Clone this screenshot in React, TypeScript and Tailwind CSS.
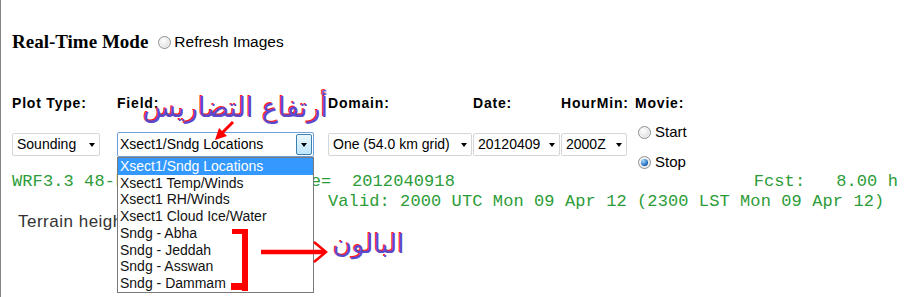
import type { ReactNode } from "react";

const line1 =
  "WRF3.3 48-km" + " ".repeat(9) + "Init Date=  2012040918" + " ".repeat(29) + "Fcst:   8.00 h";

const fieldOptions = [
  "Xsect1/Sndg Locations",
  "Xsect1 Temp/Winds",
  "Xsect1 RH/Winds",
  "Xsect1 Cloud Ice/Water",
  "Sndg - Abha",
  "Sndg - Jeddah",
  "Sndg - Asswan",
  "Sndg - Dammam",
];

function Radio({ checked = false }: { checked?: boolean }) {
  return (
    <span className="inline-flex h-[13px] w-[13px] shrink-0 items-center justify-center rounded-full border border-[#8e8f8f] bg-[radial-gradient(circle_at_40%_35%,#ffffff,#d4d4d4)] shadow-[inset_0_0_0_1px_#f2f2f2]">
      {checked && (
        <span className="h-[7px] w-[7px] rounded-full bg-[radial-gradient(circle_at_35%_30%,#a6dcff,#1760b4_70%)]" />
      )}
    </span>
  );
}

function Caret() {
  return <span className="h-0 w-0 border-x-[3.5px] border-t-[4px] border-x-transparent border-t-black" />;
}

function Select({ value, width }: { value: string; width: string }) {
  return (
    <div
      className={`flex h-[23px] items-center justify-between rounded-[2px] border border-[#d6d6d6] bg-white pl-[4px] pr-[4px] text-[14px] text-black ${width}`}
    >
      <span>{value}</span>
      <Caret />
    </div>
  );
}

function Col({ width, children }: { width: string; children: ReactNode }) {
  return <div className={`pt-[11px] ${width}`}>{children}</div>;
}

export default function App() {
  return (
    <div className="relative h-[297px] w-[922px] overflow-hidden border-l border-[#858585] bg-white font-['Liberation_Sans',Arial,sans-serif] text-black">
      <div className="pl-[11px] pt-[31px]">
        <div className="flex h-[22px] items-center">
          <span className="font-['Liberation_Serif','Times_New_Roman',serif] text-[19px] font-bold">Real-Time Mode</span>
          <span className="ml-[10px] flex">
            <Radio />
          </span>
          <span className="ml-[3px] text-[15.5px]">Refresh Images</span>
        </div>

        <div className="mt-[42px] flex h-[16px] items-center text-[14px] leading-[16px] font-bold tracking-[0.8px]">
          <span className="w-[105px]">Plot Type:</span>
          <span className="w-[211px]">Field:</span>
          <span className="w-[145px]">Domain:</span>
          <span className="w-[88px]">Date:</span>
          <span className="w-[74px]">HourMin:</span>
          <span>Movie:</span>
        </div>

        <div className="mt-[11px] flex items-start">
          <Col width="w-[105px]">
            <Select value="Sounding" width="w-[88px]" />
          </Col>

          <div className="relative z-10 w-[211px] pt-[10px]">
            <div className="flex h-[25px] w-[197px] items-stretch rounded-[2px] border border-[#6f9fd6] bg-white text-[14px]">
              <span className="flex flex-1 items-center pl-[2px]">Xsect1/Sndg Locations</span>
              <span className="m-[1px] flex w-[16px] items-center justify-center rounded-[2px] border border-[#3c7fb1] bg-[linear-gradient(#eaf6fd,#bde5fc)]">
                <Caret />
              </span>
            </div>
            <div className="absolute top-[35px] left-0 w-[197px] border border-[#7a7a7a] bg-white p-0 text-[14px] text-[#111]">
              {fieldOptions.map((opt, i) => (
                <div
                  key={opt}
                  className={`flex h-[16.75px] items-center pl-[2px] ${i === 0 ? "bg-[#3399ff] text-white" : ""}`}
                >
                  {opt}
                </div>
              ))}
            </div>
          </div>

          <Col width="w-[145px]">
            <Select value="One (54.0 km grid)" width="w-[144px]" />
          </Col>
          <Col width="w-[88px]">
            <Select value="20120409" width="w-[87px]" />
          </Col>
          <Col width="w-[74px]">
            <Select value="2000Z" width="w-[66px]" />
          </Col>

          <div className="flex flex-col gap-[10px] pl-[3px] text-[15px]">
            <div className="flex h-[20px] items-center gap-[4px]">
              <Radio />
              <span>Start</span>
            </div>
            <div className="flex h-[20px] items-center gap-[4px]">
              <Radio checked />
              <span>Stop</span>
            </div>
          </div>
        </div>

        <div className="font-['Liberation_Mono',monospace] text-[17px] leading-[20px] tracking-[0.1px] text-[#2c9c38]">
          <div className="whitespace-pre">{line1}</div>
          <div className="whitespace-pre pl-[316px]">Valid: 2000 UTC Mon 09 Apr 12 (2300 LST Mon 09 Apr 12)</div>
        </div>
        <div className="pl-[6px] text-[17px] leading-[20px] tracking-[0.5px] text-[#333]">Terrain height (m)</div>
      </div>

      {/* annotations */}
      <div
        dir="rtl"
        className="absolute top-[88px] left-[142px] z-20 font-['DejaVu_Sans',sans-serif] text-[27px] leading-[40px] text-[#5a4acb] [text-shadow:-1px_-1px_0_#ff1a1a]"
      >
        أرتفاع التضاريس
      </div>
      <svg className="absolute top-[118px] left-[209px] z-20" width="28" height="28" viewBox="0 0 28 28">
        <line x1="23" y1="4" x2="12" y2="15" stroke="#ff0000" strokeWidth="3" />
        <polygon points="5,22 9,10 17,18" fill="#ff0000" />
      </svg>

      <svg className="absolute top-[226px] left-[227px] z-20" width="24" height="68" viewBox="0 0 24 68">
        <rect x="4" y="3" width="16" height="5" fill="#ff0000" />
        <rect x="14" y="3" width="6" height="62" fill="#ff0000" />
        <rect x="3" y="57" width="17" height="7" fill="#ff0000" />
      </svg>
      <svg className="absolute top-[240px] left-[258px] z-20" width="72" height="26" viewBox="0 0 72 26">
        <line x1="2" y1="12" x2="66" y2="12" stroke="#ff0000" strokeWidth="4.5" />
        <polyline points="55,2 67,12 55,22" fill="none" stroke="#ff0000" strokeWidth="2.5" />
      </svg>
      <div
        dir="rtl"
        className="absolute top-[224px] left-[332px] z-20 font-['DejaVu_Sans',sans-serif] text-[26px] leading-[40px] text-[#5a4acb] [text-shadow:-1px_-1px_0_#ff1a1a]"
      >
        البالون
      </div>
    </div>
  );
}
